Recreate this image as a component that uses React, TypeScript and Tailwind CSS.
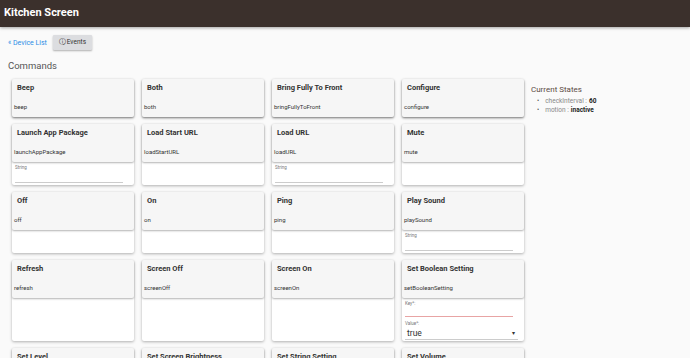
import React from "react";

type Cmd = { title: string; name: string; param?: "string" | "bool" };

const rows: Cmd[][] = [
  [
    { title: "Beep", name: "beep" },
    { title: "Both", name: "both" },
    { title: "Bring Fully To Front", name: "bringFullyToFront" },
    { title: "Configure", name: "configure" },
  ],
  [
    { title: "Launch App Package", name: "launchAppPackage", param: "string" },
    { title: "Load Start URL", name: "loadStartURL" },
    { title: "Load URL", name: "loadURL", param: "string" },
    { title: "Mute", name: "mute" },
  ],
  [
    { title: "Off", name: "off" },
    { title: "On", name: "on" },
    { title: "Ping", name: "ping" },
    { title: "Play Sound", name: "playSound", param: "string" },
  ],
  [
    { title: "Refresh", name: "refresh" },
    { title: "Screen Off", name: "screenOff" },
    { title: "Screen On", name: "screenOn" },
    { title: "Set Boolean Setting", name: "setBooleanSetting", param: "bool" },
  ],
  [
    { title: "Set Level", name: "setLevel", param: "string" },
    { title: "Set Screen Brightness", name: "setScreenBrightness", param: "string" },
    { title: "Set String Setting", name: "setStringSetting", param: "string" },
    { title: "Set Volume", name: "setVolume", param: "string" },
  ],
];

function Card({ cmd, rowHasParam }: { cmd: Cmd; rowHasParam: boolean }) {
  return (
    <div className="flex flex-col bg-white shadow-[0_1px_3px_rgba(0,0,0,0.3)] rounded-[2px]">
      <div className="h-[38px] bg-[#f6f6f6] flex flex-col shadow-[0_1px_2px_rgba(0,0,0,0.3)] rounded-[2px] relative z-10">
        <div className="pl-[5px] pt-[4px] text-[7.5px] font-bold text-[#333] leading-[10px]">{cmd.title}</div>
        <div className="pl-[2px] mt-[10px] text-[6px] text-[#333] leading-[8px]">{cmd.name}</div>
      </div>
      {rowHasParam && (
        <div className="flex-1 flex flex-col">
          {cmd.param === "string" && (
            <div className="h-[23px] px-[3px] pt-[3px] flex flex-col">
              <div className="text-[4.5px] text-[#777] leading-[6px]">String</div>
              <div className="mt-auto mb-[2px] mr-[8px] h-px bg-[#ccc]" />
            </div>
          )}
          {cmd.param === "bool" && (
            <div className="h-[43px] px-[3px] pt-[3px] flex flex-col">
              <div className="text-[4.5px] text-[#777] leading-[6px]">Key*:</div>
              <div className="mt-[9px] mr-[8px] h-px bg-[#e8a4a4]" />
              <div className="mt-[4px] text-[4.5px] text-[#777] leading-[6px]">Value*:</div>
              <div className="flex items-center justify-between pl-[2px] pr-[6px] text-[#333] mt-[1px]">
                <span className="text-[8.5px] leading-[10px]">true</span>
                <span className="text-[6px] leading-[10px]">▾</span>
              </div>
              <div className="mt-[1px] mr-[3px] h-px bg-[#ccc]" />
            </div>
          )}
        </div>
      )}
    </div>
  );
}

export default function App() {
  return (
    <div
      className="w-[690px] h-[358px] overflow-hidden bg-[#fafafa]"
      style={{ fontFamily: "Roboto, 'Liberation Sans', sans-serif" }}
    >
      <div className="h-[27px] bg-[#3b302c] flex items-center pl-[4px] shadow-[0_1px_3px_rgba(0,0,0,0.35)]">
        <span className="text-white font-bold text-[11px]">Kitchen Screen</span>
      </div>
      <div className="flex items-center pl-[8px] pt-[8px]">
        <span className="text-[#2a8de6] text-[7px] mt-[2px]">« Device List</span>
        <div className="ml-[6px] h-[15px] w-[39px] bg-[#dcdde0] shadow-[0_1px_2px_rgba(0,0,0,0.3)] rounded-[1px] flex items-center justify-center text-[6.5px] text-[#333]">
          <span className="mr-[1px] text-[7px]">ⓘ</span>Events
        </div>
      </div>
      <div className="pl-[8px] mt-[10px] text-[9.5px] text-[#555] leading-[12px]">Commands</div>
      <div className="flex mt-[7px]">
        <div className="pl-[12px] w-[524px] shrink-0 flex flex-col gap-[7px]">
          {rows.map((row, i) => {
            const has = row.some((c) => c.param);
            return (
              <div key={i} className="grid grid-cols-[122px_122px_122px_122px] gap-x-[8px]">
                {row.map((c) => (
                  <Card key={c.name} cmd={c} rowHasParam={has} />
                ))}
              </div>
            );
          })}
        </div>
        <div className="pl-[7px] pt-[6px]">
          <div className="text-[8px] text-[#5a4a44] leading-[10px]">Current States</div>
          <ul className="mt-[2px] pl-[6px] text-[6.5px] leading-[9px] text-[#888]">
            <li className="flex items-center">
              <span className="mr-[6px] text-[#555]">•</span>
              checkInterval : <b className="ml-[2px] text-[#222]">60</b>
            </li>
            <li className="flex items-center">
              <span className="mr-[6px] text-[#555]">•</span>
              motion : <b className="ml-[2px] text-[#222]">inactive</b>
            </li>
          </ul>
        </div>
      </div>
    </div>
  );
}
